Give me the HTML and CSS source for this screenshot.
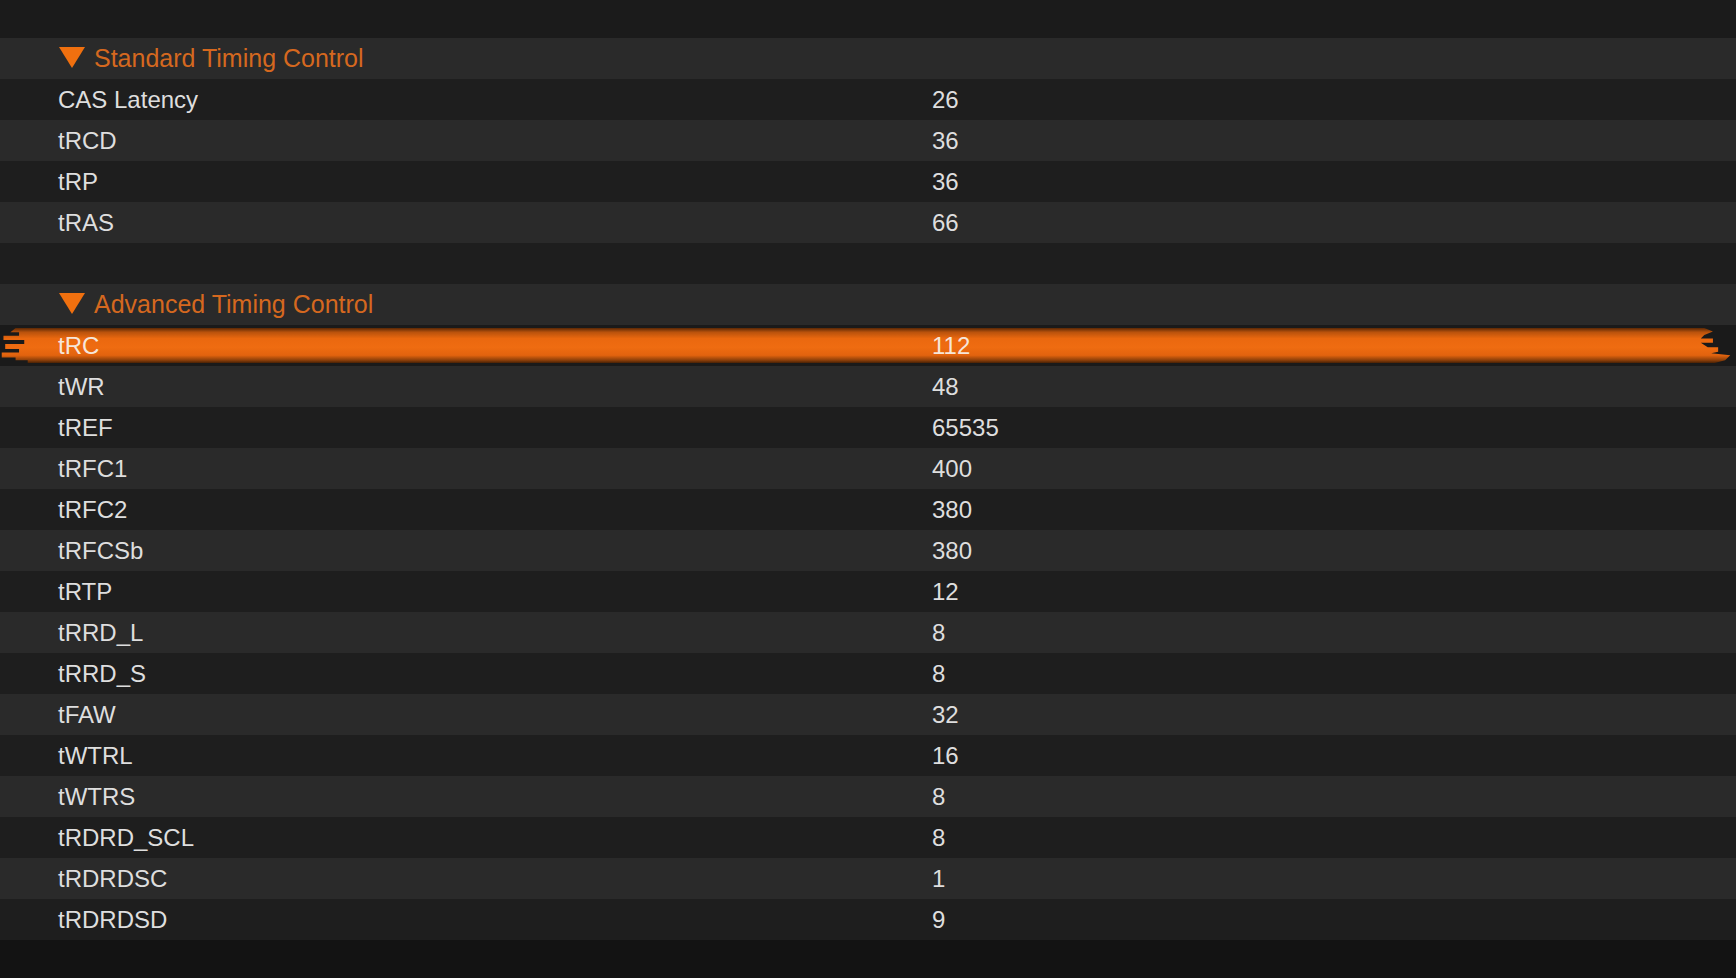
FILE: index.html
```html
<!DOCTYPE html>
<html>
<head>
<meta charset="utf-8">
<link rel="stylesheet" href="styles.css">
</head>
<body>
<div class="topbar"></div>
<div class="list">
  <div class="row light header"><svg class="tri" width="26" height="21" viewBox="0 0 26 21"><polygon points="0,0 26,0 13,21" fill="#f0700f"/></svg><span>Standard Timing Control</span></div>
  <div class="row dark"><span>CAS Latency</span><span>26</span></div>
  <div class="row light"><span>tRCD</span><span>36</span></div>
  <div class="row dark"><span>tRP</span><span>36</span></div>
  <div class="row light"><span>tRAS</span><span>66</span></div>
  <div class="row dark"></div>
  <div class="row light header"><svg class="tri" width="26" height="21" viewBox="0 0 26 21"><polygon points="0,0 26,0 13,21" fill="#f0700f"/></svg><span>Advanced Timing Control</span></div>
  <div class="row selected"><div class="bar"></div><span>tRC</span><span>112</span></div>
  <div class="row light"><span>tWR</span><span>48</span></div>
  <div class="row dark"><span>tREF</span><span>65535</span></div>
  <div class="row light"><span>tRFC1</span><span>400</span></div>
  <div class="row dark"><span>tRFC2</span><span>380</span></div>
  <div class="row light"><span>tRFCSb</span><span>380</span></div>
  <div class="row dark"><span>tRTP</span><span>12</span></div>
  <div class="row light"><span>tRRD_L</span><span>8</span></div>
  <div class="row dark"><span>tRRD_S</span><span>8</span></div>
  <div class="row light"><span>tFAW</span><span>32</span></div>
  <div class="row dark"><span>tWTRL</span><span>16</span></div>
  <div class="row light"><span>tWTRS</span><span>8</span></div>
  <div class="row dark"><span>tRDRD_SCL</span><span>8</span></div>
  <div class="row light"><span>tRDRDSC</span><span>1</span></div>
  <div class="row dark"><span>tRDRDSD</span><span>9</span></div>
</div>
</body>
</html>
```
FILE: styles.css
```css
html, body {
  margin: 0;
  padding: 0;
  background: #131313;
  font-family: "Liberation Sans", Arial, sans-serif;
}
.topbar {
  height: 38px;
  background: #1b1b1b;
}
.list {
  display: flex;
  flex-direction: column;
}
.row {
  height: 41px;
  display: grid;
  grid-template-columns: 874px 1fr;
  padding-left: 58px;
  box-sizing: border-box;
  align-items: center;
  font-size: 24px;
  line-height: 41px;
  color: #dedede;
  position: relative;
}
.row span {
  position: relative;
}
.light { background: #2a2a2a; }
.dark { background: #1e1e1e; }
.header {
  display: flex;
  align-items: center;
  gap: 9px;
  color: #d5681f;
  font-size: 25px;
}
.header .tri { margin-left: 1px; margin-top: -2px; }
.selected {
  background: #1a1a1a;
  color: #f6e6da;
}
.bar {
  position: absolute;
  left: 0;
  right: 4px;
  top: 3px;
  height: 35px;
  background: linear-gradient(to bottom, #5a2806 0%, #b9520c 12%, #ea680f 30%, #ef6c11 55%, #e2630e 78%, #8c3f09 92%, #4a2105 100%);
  clip-path: polygon(0.9% 0, 98.4% 0, 98.9% 10%, 98.4% 20%, 98.2% 30%, 98.9% 30%, 98.9% 42%, 98.2% 42%, 98.6% 55%, 99.2% 55%, 99.2% 68%, 98.8% 72%, 99.9% 78%, 99.6% 92%, 99% 100%,
    1.6% 100%, 1.6% 92%, 0.9% 92%, 0.9% 84%, 0.1% 84%, 0.1% 70%, 1.1% 70%, 1.1% 60%, 0.3% 60%, 0.3% 46%, 1.4% 46%, 1.4% 34%, 0.2% 34%, 0.2% 22%, 1.1% 22%, 1.1% 12%, 0.6% 12%);
}
```
